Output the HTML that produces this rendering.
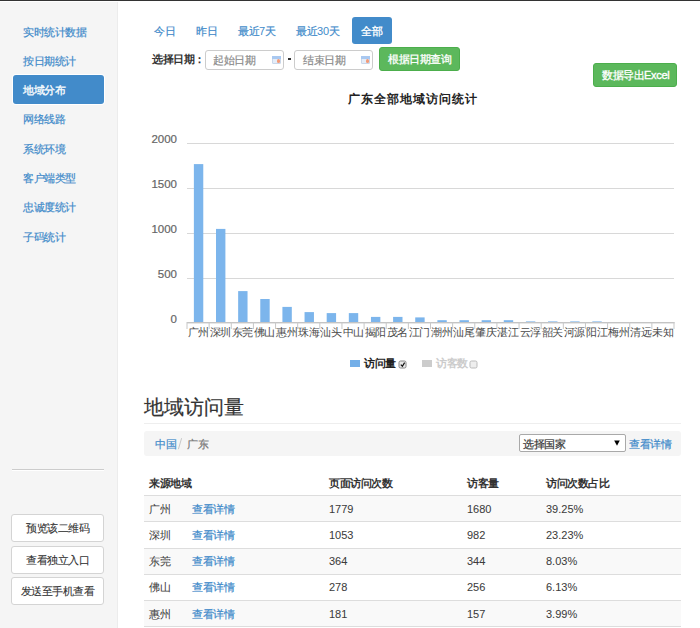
<!DOCTYPE html>
<html><head><meta charset="utf-8">
<style>
*{box-sizing:border-box;margin:0;padding:0}
html,body{width:700px;height:628px;overflow:hidden;background:#fff;font-family:"Liberation Sans",sans-serif;font-size:11px;letter-spacing:-.5px;color:#333;-webkit-text-stroke:.2px}
.abs{position:absolute;white-space:nowrap;line-height:12px}
.b{font-weight:bold;-webkit-text-stroke:0;-webkit-text-stroke:0}
.topline{position:absolute;left:0;top:0;width:700px;height:1px;background:#333}
.side{position:absolute;left:0;top:2px;width:118px;height:626px;background:#f5f5f5;border-right:1px solid #ececec}
.nav{position:absolute;left:23px;color:#428bca;line-height:12px;white-space:nowrap}
.activebox{position:absolute;left:13px;top:73px;width:91px;height:29px;background:#428bca;border-radius:3px;box-shadow:0 0 0 1px #fff}
.hr{position:absolute;left:12px;top:467px;width:92px;height:1px;background:#ccc;box-shadow:0 1px 0 #fff}
.sbtn{position:absolute;left:11px;width:93px;height:28px;border:1px solid #d4d4d4;border-radius:3px;background:#fff;text-align:center;line-height:26px;color:#333;white-space:nowrap;-webkit-text-stroke:.1px}
.tab{position:absolute;top:25px;color:#428bca;line-height:12px;white-space:nowrap}
.n{font-size:11px;letter-spacing:0;-webkit-text-stroke:0}
.pill{position:absolute;left:352px;top:17px;width:40px;height:27px;background:#428bca;border-radius:3px}
.inp{position:absolute;top:50px;height:20px;border:1px solid #ccc;border-radius:3px;background:#fff}
.ph{position:absolute;color:#8c8c8c;line-height:12px;white-space:nowrap}
.cal{position:absolute;width:9px;height:8px;border:1px solid #c9d7ea;background:#e4ecf7;border-radius:1px}
.cal:before{content:"";position:absolute;left:-1px;top:-1px;width:9px;height:2.5px;background:#a9c8f0}
.cal:after{content:"";position:absolute;right:0;bottom:0.5px;width:3.5px;height:3.5px;border-radius:50%;background:#f29a78}
.gbtn{position:absolute;background:#5cb85c;border:1px solid #4cae4c;border-radius:3px}
.wt{position:absolute;color:#fff;line-height:12px;white-space:nowrap;-webkit-text-stroke:.3px #fff}
.title{position:absolute;left:348px;top:92px;-webkit-text-stroke:0;font-size:12px;letter-spacing:1px;font-weight:bold;-webkit-text-stroke:0;color:#222;line-height:15px;white-space:nowrap}
.xl{position:absolute;top:326px;width:30px;text-align:center;color:#555;line-height:12px;white-space:nowrap;font-size:11px;letter-spacing:-.5px;-webkit-text-stroke:0;color:#4a4a4a}
.yl{position:absolute;left:140px;width:37px;text-align:right;font-size:11.5px;letter-spacing:0;color:#666;line-height:12px}
.tr{position:absolute;left:144px;width:537px;height:26.25px;border-top:1px solid #ddd}
.c{position:absolute;top:6.5px;-webkit-text-stroke:.05px;color:#3c3c3c;line-height:12px;white-space:nowrap}
.lk{color:#428bca;-webkit-text-stroke:.2px}
</style></head><body>
<div class="topline"></div>
<div class="side">
  <div class="nav" style="top:24px">实时统计数据</div>
  <div class="nav" style="top:53px">按日期统计</div>
  <div class="activebox"></div>
  <div class="nav" style="top:82px;color:#fff;-webkit-text-stroke:.3px #fff">地域分布</div>
  <div class="nav" style="top:111px">网络线路</div>
  <div class="nav" style="top:141px">系统环境</div>
  <div class="nav" style="top:170px">客户端类型</div>
  <div class="nav" style="top:199px">忠诚度统计</div>
  <div class="nav" style="top:229px">子码统计</div>
  <div class="hr"></div>
  <div class="sbtn" style="top:512px">预览该二维码</div>
  <div class="sbtn" style="top:544px">查看独立入口</div>
  <div class="sbtn" style="top:575px">发送至手机查看</div>
</div>

<div class="tab" style="left:154px">今日</div>
<div class="tab" style="left:196px">昨日</div>
<div class="tab" style="left:238px">最近<span class="n">7</span>天</div>
<div class="tab" style="left:296px">最近<span class="n">30</span>天</div>
<div class="pill"></div>
<div class="tab" style="left:361px;color:#fff;-webkit-text-stroke:.3px #fff">全部</div>

<div class="abs" style="left:152px;top:53px;font-weight:bold;-webkit-text-stroke:0">选择日期：</div>
<div class="inp" style="left:205px;width:79px"></div>
<div class="ph" style="left:213px;top:54px">起始日期</div>
<div class="cal" style="left:272px;top:56px"></div>
<div style="position:absolute;left:287.5px;top:58.4px;width:3px;height:1.4px;background:#333"></div>
<div class="inp" style="left:294px;width:79px"></div>
<div class="ph" style="left:303px;top:54px">结束日期</div>
<div class="cal" style="left:361px;top:56px"></div>
<div class="gbtn" style="left:379px;top:47px;width:81px;height:24px"></div>
<div class="wt" style="left:388px;top:53px">根据日期查询</div>
<div class="gbtn" style="left:593px;top:63px;width:84px;height:24px"></div>
<div class="wt" style="left:602px;top:69px">数据导出<span class="n" style="letter-spacing:-.3px;-webkit-text-stroke:.35px #fff">Excel</span></div>

<div class="title">广东全部地域访问统计</div>

<svg style="position:absolute;left:0;top:0" width="700" height="628">
<rect x="187.0" y="143" width="487.0" height="1" fill="#d8d8d8"/>
<rect x="187.0" y="188" width="487.0" height="1" fill="#d8d8d8"/>
<rect x="187.0" y="233" width="487.0" height="1" fill="#d8d8d8"/>
<rect x="187.0" y="278" width="487.0" height="1" fill="#d8d8d8"/>
<rect x="193.87" y="164.10" width="9.4" height="158.50" fill="#7cb5ec"/>
<rect x="216.00" y="228.90" width="9.4" height="93.70" fill="#7cb5ec"/>
<rect x="238.14" y="291.10" width="9.4" height="31.50" fill="#7cb5ec"/>
<rect x="260.28" y="299.00" width="9.4" height="23.60" fill="#7cb5ec"/>
<rect x="282.41" y="306.90" width="9.4" height="15.70" fill="#7cb5ec"/>
<rect x="304.55" y="312.10" width="9.4" height="10.50" fill="#7cb5ec"/>
<rect x="326.69" y="313.10" width="9.4" height="9.50" fill="#7cb5ec"/>
<rect x="348.82" y="313.10" width="9.4" height="9.50" fill="#7cb5ec"/>
<rect x="370.96" y="316.90" width="9.4" height="5.70" fill="#7cb5ec"/>
<rect x="393.10" y="316.90" width="9.4" height="5.70" fill="#7cb5ec"/>
<rect x="415.23" y="317.40" width="9.4" height="5.20" fill="#7cb5ec"/>
<rect x="437.37" y="320.20" width="9.4" height="2.40" fill="#7cb5ec"/>
<rect x="459.50" y="320.20" width="9.4" height="2.40" fill="#7cb5ec"/>
<rect x="481.64" y="320.20" width="9.4" height="2.40" fill="#7cb5ec"/>
<rect x="503.78" y="320.20" width="9.4" height="2.40" fill="#7cb5ec"/>
<rect x="525.91" y="321.40" width="9.4" height="1.20" fill="#7cb5ec"/>
<rect x="548.05" y="321.40" width="9.4" height="1.20" fill="#7cb5ec"/>
<rect x="570.19" y="321.40" width="9.4" height="1.20" fill="#7cb5ec"/>
<rect x="592.32" y="321.40" width="9.4" height="1.20" fill="#7cb5ec"/>
<rect x="187.0" y="322" width="487.5" height="1.4" fill="#c4c4c4"/>
<rect x="186.50" y="322" width="1" height="7" fill="#c8c8c8"/>
<rect x="208.64" y="322" width="1" height="7" fill="#c8c8c8"/>
<rect x="230.77" y="322" width="1" height="7" fill="#c8c8c8"/>
<rect x="252.91" y="322" width="1" height="7" fill="#c8c8c8"/>
<rect x="275.05" y="322" width="1" height="7" fill="#c8c8c8"/>
<rect x="297.18" y="322" width="1" height="7" fill="#c8c8c8"/>
<rect x="319.32" y="322" width="1" height="7" fill="#c8c8c8"/>
<rect x="341.45" y="322" width="1" height="7" fill="#c8c8c8"/>
<rect x="363.59" y="322" width="1" height="7" fill="#c8c8c8"/>
<rect x="385.73" y="322" width="1" height="7" fill="#c8c8c8"/>
<rect x="407.86" y="322" width="1" height="7" fill="#c8c8c8"/>
<rect x="430.00" y="322" width="1" height="7" fill="#c8c8c8"/>
<rect x="452.14" y="322" width="1" height="7" fill="#c8c8c8"/>
<rect x="474.27" y="322" width="1" height="7" fill="#c8c8c8"/>
<rect x="496.41" y="322" width="1" height="7" fill="#c8c8c8"/>
<rect x="518.55" y="322" width="1" height="7" fill="#c8c8c8"/>
<rect x="540.68" y="322" width="1" height="7" fill="#c8c8c8"/>
<rect x="562.82" y="322" width="1" height="7" fill="#c8c8c8"/>
<rect x="584.95" y="322" width="1" height="7" fill="#c8c8c8"/>
<rect x="607.09" y="322" width="1" height="7" fill="#c8c8c8"/>
<rect x="629.23" y="322" width="1" height="7" fill="#c8c8c8"/>
<rect x="651.36" y="322" width="1" height="7" fill="#c8c8c8"/>
<rect x="673.50" y="322" width="1" height="7" fill="#c8c8c8"/>
<rect x="350" y="360" width="10" height="7" fill="#74afe8"/>
<rect x="422" y="360" width="10" height="7" fill="#cccccc"/>
<rect x="399" y="361" width="7" height="7" rx="1.5" fill="#e8e8e8" stroke="#888" stroke-width="1"/>
<path d="M400.8 364.6 L402.4 366.2 L404.6 362.6" fill="none" stroke="#111" stroke-width="1.2"/>
<rect x="470" y="361" width="7" height="7" rx="1.5" fill="#eee" stroke="#bbb" stroke-width="1"/>
</svg>
<div class="xl" style="left:183.07px">广州</div>
<div class="xl" style="left:205.20px">深圳</div>
<div class="xl" style="left:227.34px">东莞</div>
<div class="xl" style="left:249.48px">佛山</div>
<div class="xl" style="left:271.61px">惠州</div>
<div class="xl" style="left:293.75px">珠海</div>
<div class="xl" style="left:315.89px">汕头</div>
<div class="xl" style="left:338.02px">中山</div>
<div class="xl" style="left:360.16px">揭阳</div>
<div class="xl" style="left:382.30px">茂名</div>
<div class="xl" style="left:404.43px">江门</div>
<div class="xl" style="left:426.57px">潮州</div>
<div class="xl" style="left:448.70px">汕尾</div>
<div class="xl" style="left:470.84px">肇庆</div>
<div class="xl" style="left:492.98px">湛江</div>
<div class="xl" style="left:515.11px">云浮</div>
<div class="xl" style="left:537.25px">韶关</div>
<div class="xl" style="left:559.39px">河源</div>
<div class="xl" style="left:581.52px">阳江</div>
<div class="xl" style="left:603.66px">梅州</div>
<div class="xl" style="left:625.80px">清远</div>
<div class="xl" style="left:647.93px">未知</div>
<div class="yl" style="top:132.6px">2000</div>
<div class="yl" style="top:177.6px">1500</div>
<div class="yl" style="top:222.6px">1000</div>
<div class="yl" style="top:267.6px">500</div>
<div class="yl" style="top:312.6px">0</div>
<div class="abs" style="left:364px;top:357px;font-size:11px;letter-spacing:-.3px;font-weight:bold;-webkit-text-stroke:0;color:#222">访问量</div>
<div class="abs" style="left:436px;top:357px;font-size:11px;letter-spacing:-.3px;font-weight:bold;-webkit-text-stroke:0;color:#ccc">访客数</div>

<div class="abs" style="left:144px;top:396px;font-size:19.5px;letter-spacing:0;line-height:22px;color:#333">地域访问量</div>
<div style="position:absolute;left:144px;top:423px;width:537px;height:1px;background:#eee"></div>
<div style="position:absolute;left:144px;top:431px;width:537px;height:25px;background:#f5f5f5;border-radius:3px"></div>
<div class="abs lk" style="left:155px;top:438px">中国</div>
<svg style="position:absolute;left:177px;top:436px" width="8" height="16"><path d="M4.6 2.2 L1.4 13.2" stroke="#c8c8c8" stroke-width="1" fill="none"/></svg>
<div class="abs" style="left:187px;top:438px;color:#777">广东</div>
<div style="position:absolute;left:519px;top:434px;width:107px;height:18px;background:#fff;border:1px solid #a9a9a9;border-radius:2px"></div>
<div class="abs" style="left:523px;top:438px;color:#333">选择国家</div>
<svg style="position:absolute;left:0;top:0" width="700" height="628"><path d="M614.2 440.6 L619.8 440.6 L617 445.8 Z" fill="#000"/></svg>
<div class="abs lk" style="left:629px;top:438px">查看详情</div>

<div class="abs" style="left:149px;top:477px;font-weight:bold;-webkit-text-stroke:0">来源地域</div>
<div class="abs" style="left:329px;top:477px;font-weight:bold;-webkit-text-stroke:0">页面访问次数</div>
<div class="abs" style="left:467px;top:477px;font-weight:bold;-webkit-text-stroke:0">访客量</div>
<div class="abs" style="left:546px;top:477px;font-weight:bold;-webkit-text-stroke:0">访问次数占比</div>
<div class="tr" style="top:495.0px;background:#f9f9f9"><span class="c" style="left:5px">广州</span><span class="c lk" style="left:48px">查看详情</span><span class="c n" style="left:185px">1779</span><span class="c n" style="left:323px">1680</span><span class="c n" style="left:402px">39.25%</span></div>
<div class="tr" style="top:521.3px;background:#fff"><span class="c" style="left:5px">深圳</span><span class="c lk" style="left:48px">查看详情</span><span class="c n" style="left:185px">1053</span><span class="c n" style="left:323px">982</span><span class="c n" style="left:402px">23.23%</span></div>
<div class="tr" style="top:547.6px;background:#f9f9f9"><span class="c" style="left:5px">东莞</span><span class="c lk" style="left:48px">查看详情</span><span class="c n" style="left:185px">364</span><span class="c n" style="left:323px">344</span><span class="c n" style="left:402px">8.03%</span></div>
<div class="tr" style="top:573.9px;background:#fff"><span class="c" style="left:5px">佛山</span><span class="c lk" style="left:48px">查看详情</span><span class="c n" style="left:185px">278</span><span class="c n" style="left:323px">256</span><span class="c n" style="left:402px">6.13%</span></div>
<div class="tr" style="top:600.2px;background:#f9f9f9"><span class="c" style="left:5px">惠州</span><span class="c lk" style="left:48px">查看详情</span><span class="c n" style="left:185px">181</span><span class="c n" style="left:323px">157</span><span class="c n" style="left:402px">3.99%</span></div>
<div style="position:absolute;left:144px;top:626px;width:537px;height:1px;background:#ddd"></div>
</body></html>
